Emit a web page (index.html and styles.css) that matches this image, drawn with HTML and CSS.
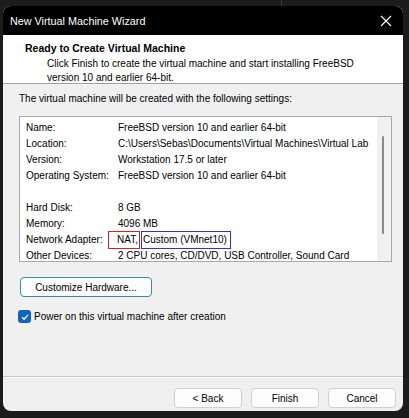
FILE: index.html
```html
<!DOCTYPE html>
<html>
<head>
<meta charset="utf-8">
<link rel="stylesheet" href="styles.css">
</head>
<body>
<div class="backdrop-line"></div>
<div class="dialog">
  <div class="titlebar">
    <span class="title">New Virtual Machine Wizard</span>
    <svg class="close" width="12" height="12" viewBox="0 0 12 12"><path d="M1 1L11 11M11 1L1 11" stroke="#fff" stroke-width="1.1"/></svg>
  </div>
  <div class="header">
    <div class="heading">Ready to Create Virtual Machine</div>
    <div class="subtitle">Click Finish to create the virtual machine and start installing FreeBSD<br>version 10 and earlier 64-bit.</div>
  </div>
  <div class="body">
    <div class="intro">The virtual machine will be created with the following settings:</div>
    <div class="box">
      <div class="rows">
        <div class="row"><span class="label">Name:</span><span class="value">FreeBSD version 10 and earlier 64-bit</span></div>
        <div class="row"><span class="label">Location:</span><span class="value">C:\Users\Sebas\Documents\Virtual Machines\Virtual Lab</span></div>
        <div class="row"><span class="label">Version:</span><span class="value">Workstation 17.5 or later</span></div>
        <div class="row"><span class="label">Operating System:</span><span class="value">FreeBSD version 10 and earlier 64-bit</span></div>
        <div class="row"></div>
        <div class="row"><span class="label">Hard Disk:</span><span class="value">8 GB</span></div>
        <div class="row"><span class="label">Memory:</span><span class="value">4096 MB</span></div>
        <div class="row"><span class="label">Network Adapter:</span><span class="value"><span class="mark red">NAT,</span><span class="mark purple">Custom (VMnet10)</span></span></div>
        <div class="row"><span class="label">Other Devices:</span><span class="value">2 CPU cores, CD/DVD, USB Controller, Sound Card</span></div>
      </div>
      <div class="scroll"><div class="thumb"></div></div>
    </div>
    <div class="custom-row"><button class="btn customize">Customize Hardware...</button></div>
    <label class="check-row"><span class="checkbox"><svg width="10" height="10" viewBox="0 0 10 10"><path d="M2 5.2L4.1 7.2L8 2.9" fill="none" stroke="#fff" stroke-width="1.3"/></svg></span><span>Power on this virtual machine after creation</span></label>
  </div>
  <div class="footer">
    <button class="btn fbtn">&lt; Back</button>
    <button class="btn fbtn">Finish</button>
    <button class="btn fbtn">Cancel</button>
  </div>
</div>
</body>
</html>
```
FILE: styles.css
```css
html, body {
  margin: 0;
  padding: 0;
  background: #1c1c1c;
  width: 409px;
  height: 418px;
  overflow: hidden;
  font-family: "Liberation Sans", Arial, sans-serif;
}
.backdrop-line {
  position: absolute;
  left: 281px;
  top: 0;
  width: 1px;
  height: 6px;
  background: #3a3a3a;
}
.dialog {
  position: relative;
  margin: 6px 0 0 3px;
  width: 400px;
  height: 405px;
  border-radius: 8px;
  overflow: hidden;
  background: #f0f0f0;
  display: flex;
  flex-direction: column;
}
.titlebar {
  height: 29px;
  flex: none;
  background: #000;
  color: #fff;
  display: flex;
  align-items: center;
  justify-content: space-between;
  padding: 0 11px 0 7px;
  font-family: "Liberation Sans", Arial, sans-serif;
  font-size: 10.8px;
}
.close { margin-top: 1px; }
.header {
  height: 49px;
  flex: none;
  background: #fff;
  border-bottom: 1px solid #a0a0a0;
  box-sizing: border-box;
  padding: 5px 0 0 22px;
  color: #000;
}
.heading {
  font-weight: bold;
  font-size: 10.5px;
  height: 16px;
  line-height: 16px;
}
.subtitle {
  padding-left: 22px;
  font-size: 10px;
  line-height: 14px;
  margin-top: 1px;
}
.body {
  flex: 1;
  display: flex;
  flex-direction: column;
  padding: 8px 11px 0 16px;
  font-size: 10px;
  color: #000;
  border-bottom: 1px solid #c8c8c8;
}
.intro {
  line-height: 14px;
  padding-left: 0;
}
.box {
  margin-top: 10px;
  height: 146px;
  box-sizing: border-box;
  border: 1px solid #a8a8a8;
  background: #fff;
  display: flex;
}
.rows {
  flex: 1;
  padding: 3px 0 0 6px;
}
.row {
  height: 16px;
  line-height: 16px;
  display: flex;
  white-space: nowrap;
}
.label { width: 92px; flex: none; }
.value { display: flex; }
.mark {
  box-sizing: border-box;
  line-height: 14px;
  height: 18px;
  margin-top: -1px;
  padding: 1px 1px 0 1px;
  border: 1.5px solid;
}
.red { border-color: #c4272d; padding-left: 8px; margin-left: -10px; }
.purple { border-color: #4b2c9c; margin-left: 1px; padding-left: 1px; padding-right: 3px; }
.scroll {
  width: 14px;
  flex: none;
  background: #f0f0f0;
  position: relative;
}
.thumb {
  position: absolute;
  left: 5px;
  top: 19px;
  width: 2px;
  height: 98px;
  background: #8a8a8a;
  border-radius: 1px;
}
.btn {
  font-family: "Liberation Sans", Arial, sans-serif;
  font-size: 10px;
  color: #000;
  background: #fdfdfd;
  border: 1px solid #d0d0d0;
  border-radius: 4px;
  padding: 0;
}
.custom-row { margin-top: 15px; }
.customize {
  width: 132px;
  height: 20px;
  border: 1px solid #3c8aa0;
  margin-left: 1px;
}
.check-row {
  margin-top: 13px;
  display: flex;
  align-items: center;
  gap: 3px;
  margin-left: -1px;
}
.checkbox {
  width: 13px;
  height: 13px;
  border-radius: 3px;
  background: #0f65c0;
  display: flex;
  align-items: center;
  justify-content: center;
}
.footer {
  height: 34px;
  flex: none;
  display: flex;
  justify-content: flex-end;
  align-items: flex-start;
  gap: 9px;
  padding: 10px 7px 0 0;
  box-sizing: border-box;
  border-top: 1px solid #fafafa;
}
.fbtn {
  width: 68px;
  height: 20px;
}
```
